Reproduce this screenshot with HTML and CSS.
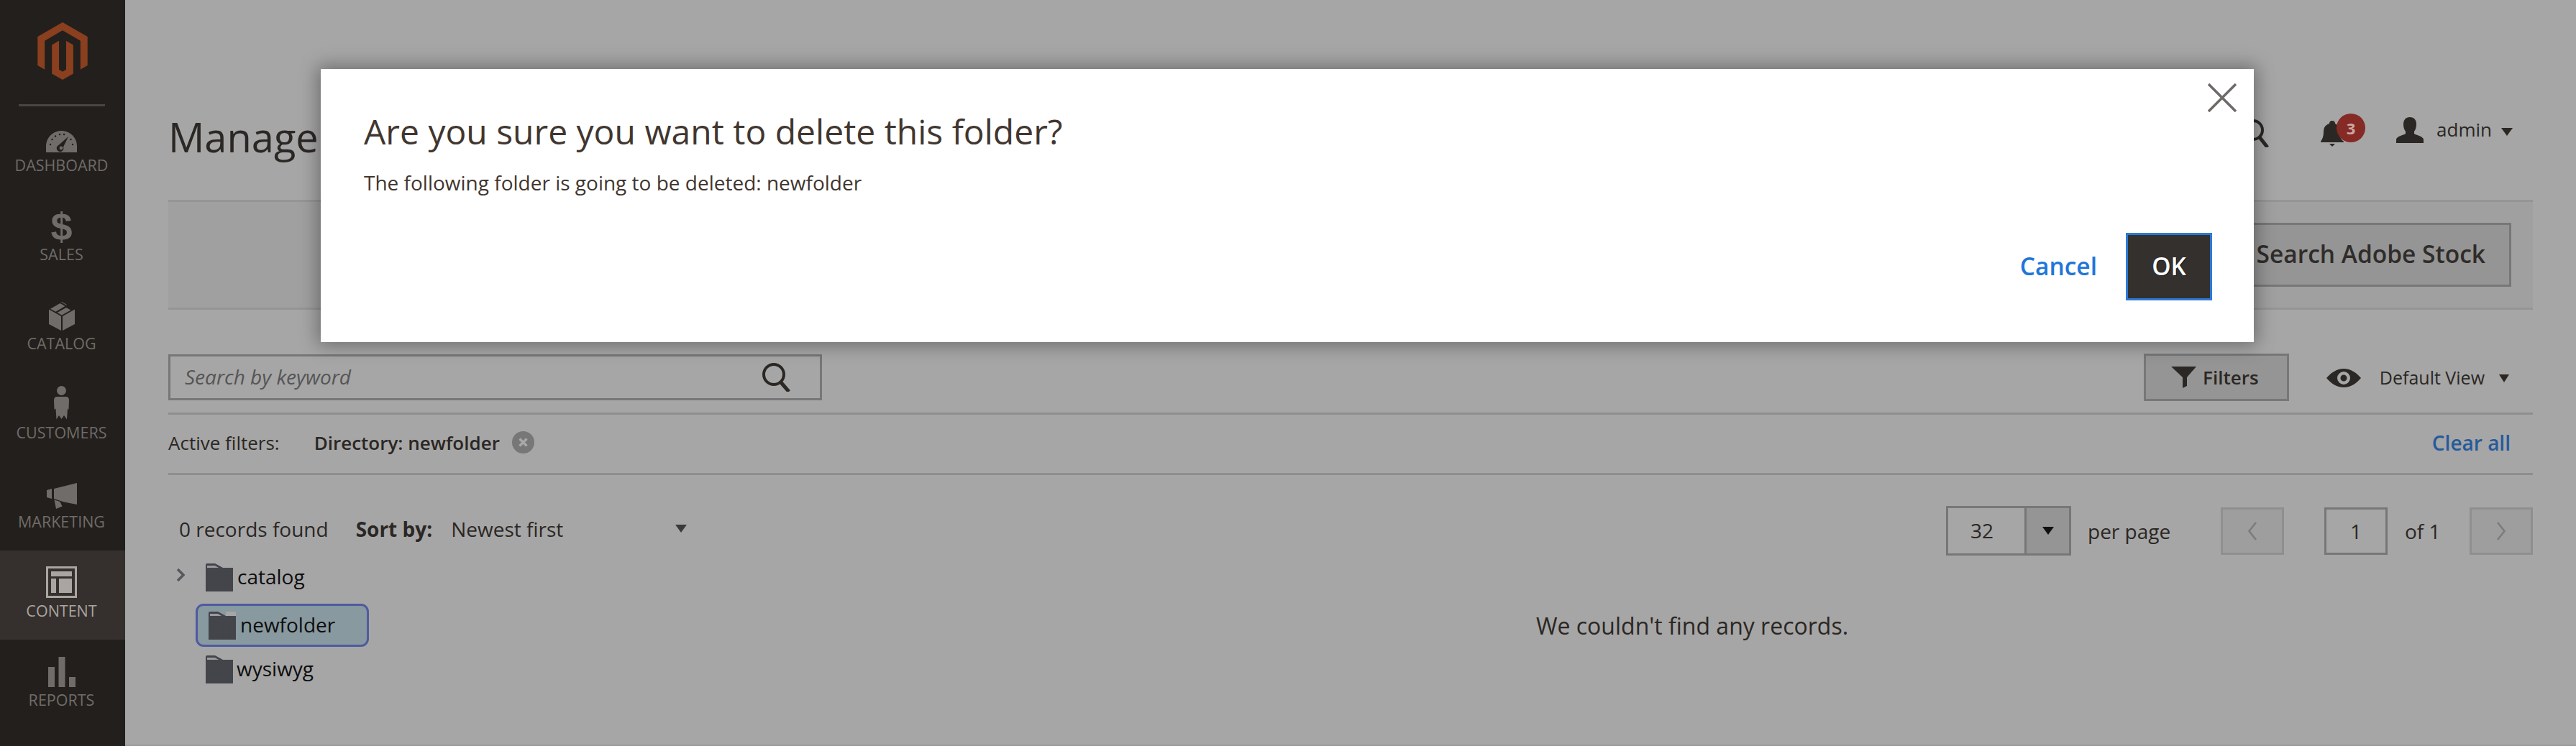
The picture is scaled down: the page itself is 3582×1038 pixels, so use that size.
FILE: index.html
```html
<!DOCTYPE html>
<html lang="en">
<head>
<meta charset="utf-8">
<title>Media Gallery</title>
<link rel="stylesheet" href="styles.css">
</head>
<body>
<div class="page">
  <nav class="sidebar">
    <div class="logo-wrap">
      <svg class="logo" viewBox="0 0 43.4 50"><path d="M21.7 0 0 12.5v25l6.2 3.6V16.1l15.5-9 15.5 9v25l6.2-3.6v-25zM24.8 41.1 21.7 43 18.6 41.1V16.1l-6.2 3.6v25L21.7 50l9.3-5.3v-25l-6.2-3.6z"/></svg>
    </div>
    <div class="nav-rule"></div>
    <a class="nav-item">
      <span class="nav-icon">
        <svg width="43" height="30" viewBox="0 0 43 30"><path class="ico" d="M0 30V21.500C0 9.600 9.600 0 21.500 0S43 9.600 43 21.500V30z"/><g class="ico-dark"><circle cx="6" cy="19" r="1.200"/><circle cx="8.500" cy="12" r="1.200"/><circle cx="13" cy="7.500" r="1.200"/><circle cx="19" cy="5" r="1.200"/><circle cx="25" cy="5" r="1.200"/><circle cx="37" cy="19" r="1.200"/><circle cx="34.500" cy="12" r="1.200"/><path d="M31 8 24 22.500a4.800 4.800 0 1 1-6.500-2.500z"/></g><circle class="ico" cx="21" cy="24" r="2.400"/></svg>
      </span>
      <span class="nav-label">Dashboard</span>
    </a>
    <a class="nav-item">
      <span class="nav-icon"><span class="dollar">$</span></span>
      <span class="nav-label">Sales</span>
    </a>
    <a class="nav-item">
      <span class="nav-icon">
        <svg width="36" height="40" viewBox="0 0 36 40"><path class="ico" d="M0 10.500 17 20v20L0 31zM36 10.500 19 20v20l17-9zM18 18.500l-6.500-3.600L24 8l6.500 3.500zM9.500 13.800 2 9.700 15.500 2l7 4z M18 0l-1 .5 7 4 1-.5z"/></svg>
      </span>
      <span class="nav-label">Catalog</span>
    </a>
    <a class="nav-item">
      <span class="nav-icon">
        <svg width="21" height="47" viewBox="0 0 21 47"><circle class="ico" cx="10.500" cy="6.500" r="6.500"/><path class="ico" d="M3 15h15q3 1 3 5l-.5 13-1.500-1.500-1 15-4-5.500-3.500 5-3.500-5-3.500 5.500-1-15L.5 33 0 20q0-4 3-5z"/></svg>
      </span>
      <span class="nav-label">Customers</span>
    </a>
    <a class="nav-item">
      <span class="nav-icon">
        <svg width="42" height="36" viewBox="0 0 42 36"><path class="ico" d="M42 0v30L24 26.500 10 22V8zM0 10l7-2v14l-7-2zM10.500 23.500l8 2.500 3 6.500L13 36z"/></svg>
      </span>
      <span class="nav-label">Marketing</span>
    </a>
    <a class="nav-item nav-item-active">
      <span class="nav-icon">
        <svg width="43" height="44" viewBox="0 0 43 44"><path class="ico" fill-rule="evenodd" d="M0 0h43v44H0zM3 3v38h37V3z"/><path class="ico" d="M7 7h29v7H7zM7 17h7v20H7zM18 17h18v20H18z"/></svg>
      </span>
      <span class="nav-label">Content</span>
    </a>
    <a class="nav-item">
      <span class="nav-icon">
        <svg width="38" height="42" viewBox="0 0 38 42"><path class="ico" d="M0 14h9v28H0zM14.500 0h9v42h-9zM29 28h9v14h-9z"/></svg>
      </span>
      <span class="nav-label">Reports</span>
    </a>
  </nav>

  <main class="main">
    <header class="page-header">
      <h1 class="page-title">Manage</h1>
      <div class="header-actions">
        <svg class="header-search" width="40" height="40" viewBox="0 0 40 40"><circle cx="16" cy="16" r="13" fill="none" stroke="#2b2724" stroke-width="4"/><path d="M25 26 36 40" stroke="#2b2724" stroke-width="5" fill="none"/></svg>
        <div class="bell-wrap">
          <svg width="32" height="36" viewBox="0 0 32 36"><path fill="#2b2724" d="M16 0c3 0 4 2 4 4 5 2 6 6 6 12 0 6 2 10 6 13v1H0v-1c2-3 4-7 4-13 0-6 2-10 8-12 0-2 1-4 4-4zM12 32h8l-4 4z"/></svg>
          <span class="badge">3</span>
        </div>
        <svg class="user-icon" width="38" height="36" viewBox="0 0 38 36"><path fill="#2b2724" d="M19 0c6 0 9 4 9 10 0 4-1 7-3 10v3c2 2 12 3 13 8v5H0v-5c1-5 11-6 13-8v-3c-2-3-3-6-3-10C10 4 13 0 19 0z"/></svg>
        <span class="admin-name">admin</span>
        <span class="caret caret-admin"></span>
      </div>
    </header>

    <section class="strip">
      <button class="btn-stock">Search Adobe Stock</button>
    </section>

    <section class="search-row">
      <div class="search-box">
        <span class="placeholder">Search by keyword</span>
        <svg width="41" height="41" viewBox="0 0 41 41"><circle cx="17" cy="17" r="14" fill="none" stroke="#2b2724" stroke-width="4"/><path d="M26 27 38 41" stroke="#2b2724" stroke-width="5" fill="none"/></svg>
      </div>
      <div class="search-tools">
        <button class="btn-filters">
          <svg width="35" height="30" viewBox="0 0 35 30"><path fill="#2b2724" d="M0 0h35L22 15v12l-6 3V15z"/></svg>
          <span>Filters</span>
        </button>
        <div class="view-switch">
          <svg width="48" height="26" viewBox="0 0 48 26"><path fill="#2b2724" fill-rule="evenodd" d="M24 0c10 0 18 6 24 13-6 7-14 13-24 13S6 20 0 13C6 6 14 0 24 0zm0 4a9 9 0 1 0 0 18 9 9 0 0 0 0-18zm0 4.500a4.500 4.500 0 1 1 0 9 4.500 4.500 0 0 1 0-9z"/></svg>
          <span class="view-label">Default View</span>
          <span class="caret caret-view"></span>
        </div>
      </div>
    </section>

    <section class="filters-row">
      <div class="filters-left">
        <span class="filters-label">Active filters:</span>
        <span class="filter-chip">Directory: newfolder</span>
        <svg class="chip-x" width="31" height="31" viewBox="0 0 31 31"><circle cx="15.500" cy="15.500" r="15.500" fill="#777"/><path d="M10.500 10.500l10 10m0-10l-10 10" stroke="#a8a8a8" stroke-width="3.500"/></svg>
      </div>
      <a class="clear-all">Clear all</a>
    </section>

    <section class="toolbar">
      <div class="toolbar-left">
        <span class="records">0 records found</span>
        <strong class="sort-label">Sort by:</strong>
        <span class="sort-value">Newest first</span>
        <span class="caret caret-sort"></span>
      </div>
      <div class="toolbar-right">
        <div class="per-page-select">
          <span class="per-page-value">32</span>
          <span class="per-page-toggle"><span class="caret caret-select"></span></span>
        </div>
        <span class="per-page-label">per page</span>
        <span class="pager-btn pager-prev"><svg width="14" height="26" viewBox="0 0 14 26"><path d="M12 1 2.500 13 12 25" fill="none" stroke="#7b7b7b" stroke-width="2.500"/></svg></span>
        <span class="pager-input">1</span>
        <span class="pager-of">of 1</span>
        <span class="pager-btn pager-next"><svg width="14" height="26" viewBox="0 0 14 26"><path d="M2 1l9.500 12L2 25" fill="none" stroke="#7b7b7b" stroke-width="2.500"/></svg></span>
      </div>
    </section>

    <section class="content">
      <ul class="tree">
        <li class="tree-row tree-row-first">
          <svg class="chevron" width="12" height="18" viewBox="0 0 12 18"><path d="M2 1l8 8-8 8" fill="none" stroke="#55585d" stroke-width="3.500"/></svg>
          <svg class="folder" viewBox="0 0 38 39"><path fill="#43454b" d="M0 2Q0 0 2 0H13L24 6H38V39H0z"/><path fill="#9c9c9e" d="M2 3H13L18 6H2z"/></svg>
          <span class="tree-text">catalog</span>
        </li>
        <li class="tree-row tree-row-selected">
          <svg class="folder" viewBox="0 0 38 39"><path fill="#a6a6a6" d="M24 0H38V6H24z"/><path fill="#43454b" d="M0 2Q0 0 2 0H13L24 6H38V39H0z"/><path fill="#9c9c9e" d="M2 3H13L18 6H2z"/></svg>
          <span class="tree-text">newfolder</span>
        </li>
        <li class="tree-row tree-row-last">
          <svg class="folder" viewBox="0 0 38 39"><path fill="#43454b" d="M0 2Q0 0 2 0H13L24 6H38V39H0z"/><path fill="#9c9c9e" d="M2 3H13L18 6H2z"/></svg>
          <span class="tree-text">wysiwyg</span>
        </li>
      </ul>
      <p class="empty">We couldn't find any records.</p>
    </section>
  </main>
</div>

<div class="modal" role="dialog">
  <button class="modal-close" aria-label="Close">
    <svg width="40" height="40" viewBox="0 0 40 40"><path d="M1 1l38 38M39 1 1 39" stroke="#6d6a67" stroke-width="3.600" fill="none"/></svg>
  </button>
  <h2 class="modal-title">Are you sure you want to delete this folder?</h2>
  <p class="modal-text">The following folder is going to be deleted: newfolder</p>
  <div class="modal-footer">
    <a class="modal-cancel">Cancel</a>
    <button class="modal-ok">OK</button>
  </div>
</div>
</body>
</html>
```

FILE: styles.css
```css
* { box-sizing: border-box; }
html, body { margin: 0; padding: 0; height: 1038px; }
body {
  background: #a6a6a6;
  color: #2b2724;
  font-family: "Open Sans", sans-serif;
  font-size: 28px;
  overflow: hidden;
}
button { font-family: inherit; cursor: pointer; }

.page { display: flex; height: 1038px; overflow: hidden; }

/* Sidebar */
.sidebar { width: 174px; flex: none; background: #231f1c; display: flex; flex-direction: column; }
.logo-wrap { height: 145px; padding-top: 31px; padding-left: 52px; }
.logo { display: block; width: 70px; height: 80px; fill: #8a3f1e; }
.nav-rule { height: 3px; width: 120px; margin-left: 26px; margin-bottom: -2px; background: #4a4542; }
.nav-item { height: 124px; display: flex; flex-direction: column; align-items: center; color: #6f6c69; flex: none; padding-right: 3px; }
.nav-icon { height: 66px; display: flex; align-items: flex-end; justify-content: center; }
.nav-label { margin-top: 2px; line-height: 32px; font-size: 21.5px; text-transform: uppercase; }
.ico { fill: #6f6c69; }
.ico-dark { fill: #231f1c; }
.dollar { font-family: "Liberation Sans", sans-serif; font-weight: 700; font-size: 54px; line-height: 50px; color: #6f6c69; position: relative; top: 4px; }
.nav-item-active { background: #35302d; color: #a9a5a1; }
.nav-item-active .ico { fill: #a9a5a1; }

/* Main */
.main { flex: 1; min-width: 0; padding: 0 60px; height: 1038px; border-bottom: 2px solid #999; }
.page-header { height: 278px; display: flex; justify-content: space-between; align-items: flex-start; position: relative; }
.page-title { margin: 148px 0 0; font-size: 56px; font-weight: 400; line-height: 84px; color: #2b2724; white-space: nowrap; }
.header-actions { display: flex; align-items: flex-start; padding-top: 158px; padding-right: 28px; }
.header-search { margin-top: 7px; margin-right: 70px; }
.bell-wrap { display: flex; width: 62px; padding-top: 10px; position: relative; }
.badge { position: absolute; left: 22px; top: 0; width: 40px; height: 40px; border-radius: 50%; background: #852a25; color: #cfa6a2; font-size: 22px; font-weight: 700; line-height: 40px; text-align: center; }
.user-icon { margin-left: 43px; margin-top: 5px; }
.admin-name { margin-left: 18px; font-size: 26px; line-height: 44px; }
.caret { display: block; width: 0; height: 0; border-style: solid; border-color: #2b2724 transparent transparent; }
.caret-admin { margin-left: 13px; margin-top: 20px; border-width: 11px 8px 0; }

.strip { height: 153px; background: #a0a0a0; border-top: 3px solid #959595; border-bottom: 3px solid #959595; display: flex; justify-content: flex-end; align-items: flex-start; padding: 29px 30px 0 0; }
.btn-stock { width: 600px; height: 89px; background: #959595; border: 3px solid #777; color: #2f2c2a; font-size: 33.5px; font-weight: 600; line-height: 80px; text-align: right; padding: 0 33px 4px 0; }

.search-row { display: flex; justify-content: space-between; align-items: flex-start; margin-top: 62px; height: 84px; border-bottom: 3px solid #8e8e8e; }
.search-box { width: 909px; height: 64px; border: 3px solid #777; display: flex; align-items: center; justify-content: space-between; padding: 0 40px 2px 20px; }
.placeholder { font-style: italic; font-size: 28px; color: #555; }
.search-tools { display: flex; align-items: center; padding-right: 33px; }
.btn-filters { width: 202px; height: 66px; margin-top: -1px; background: #959595; border: 3px solid #777; display: flex; align-items: center; justify-content: center; gap: 9px; color: #2b2724; font-size: 26px; font-weight: 600; padding: 0 4px 0 0; }
.view-switch { display: flex; align-items: center; margin-left: 52px; }
.view-label { margin-left: 26px; font-size: 25px; margin-bottom: 2px; }
.caret-view { margin-left: 20px; margin-top: 2px; border-width: 11px 7.500px 0; }

.filters-row { height: 84px; display: flex; justify-content: space-between; align-items: center; border-bottom: 3px solid #8e8e8e; padding-right: 31px; padding-bottom: 4px; }
.filters-left { display: flex; align-items: center; }
.filters-label { font-size: 26px; }
.filter-chip { margin-left: 48px; font-weight: 600; font-size: 26px; }
.chip-x { margin-left: 17px; }
.clear-all { color: #255a9b; font-weight: 600; font-size: 28px; }

.toolbar { display: flex; justify-content: space-between; align-items: center; margin-top: 43px; height: 69px; }
.toolbar-left { display: flex; align-items: center; padding-left: 15px; padding-bottom: 6px; }
.records { font-size: 28px; }
.sort-label { margin-left: 38px; font-size: 28px; font-weight: 700; }
.sort-value { margin-left: 26px; font-size: 28px; width: 312px; }
.caret-sort { border-width: 11px 8px 0; border-top-color: #3a3a3a; }
.toolbar-right { display: flex; align-items: center; }
.per-page-select { width: 174px; height: 69px; border: 3px solid #777; display: flex; }
.per-page-value { width: 106px; text-align: left; padding-left: 31px; line-height: 63px; font-size: 28px; }
.per-page-toggle { flex: 1; background: #959595; border-left: 3px solid #777; display: flex; align-items: center; justify-content: center; }
.caret-select { border-width: 11px 8px 0; border-top-color: #111; }
.per-page-label { margin-left: 23px; font-size: 28px; width: 185px; }
.pager-btn { width: 88px; height: 66px; background: #9e9e9e; border: 3px solid #8f8f8f; display: flex; align-items: center; justify-content: center; }
.pager-input { margin-left: 56px; width: 88px; height: 66px; border: 3px solid #777; text-align: center; line-height: 60px; font-size: 28px; }
.pager-of { width: 114px; padding-left: 24px; font-size: 28px; }

.content { display: flex; align-items: flex-start; }
.tree { list-style: none; margin: 11px 0 0; padding: 0; width: 950px; flex: none; color: #0e0e0e; }
.tree-row { display: flex; align-items: center; }
.tree-text { font-size: 28px; line-height: 39px; }
.folder { width: 38px; height: 39px; flex: none; }
.tree-row-first { height: 39px; padding-left: 11px; }
.chevron { margin-right: 29px; margin-top: -8px; }
.tree-row-first .tree-text { margin-left: 6px; margin-top: -3px; }
.tree-row-selected { margin: 17px 0 0 38px; width: 241px; height: 60px; border: 3px solid #4e5b9f; border-radius: 11px; background: #88999f; padding-left: 15px; }
.tree-row-selected .tree-text { margin-left: 6px; margin-top: -1px; }
.tree-row-last { margin-top: 12px; height: 39px; padding-left: 52px; }
.tree-row-last .tree-text { margin-left: 5px; margin-top: -3px; }
.empty { flex: 1; margin: 74px 0 0; text-align: center; font-size: 32px; line-height: 48px; color: #2b2724; }

/* Modal */
.modal { position: absolute; left: 446px; top: 96px; width: 2688px; height: 380px; background: #fff; box-shadow: 0 0 24px 4px rgba(0,0,0,.35); padding: 0 58px 58px 60px; display: flex; flex-direction: column; }
.modal-close { position: absolute; right: 24px; top: 20px; width: 40px; height: 40px; padding: 0; background: none; border: 0; display: flex; }
.modal-title { margin: 56px 0 0; font-size: 48px; font-weight: 400; line-height: 62px; color: #41362f; }
.modal-text { margin: 20px 0 0; font-size: 28px; line-height: 40px; color: #41362f; }
.modal-footer { margin-top: auto; display: flex; justify-content: flex-end; align-items: center; }
.modal-cancel { color: #1f76d8; font-size: 33.5px; font-weight: 600; margin-right: 40px; margin-bottom: 3px; }
.modal-ok { width: 120px; height: 94px; background: #33302e; border: 3px solid #2d79d5; color: #fff; font-size: 33.5px; font-weight: 600; padding: 0 0 2px; text-shadow: 1px 1px 0 rgba(0,0,0,.5); }
```
